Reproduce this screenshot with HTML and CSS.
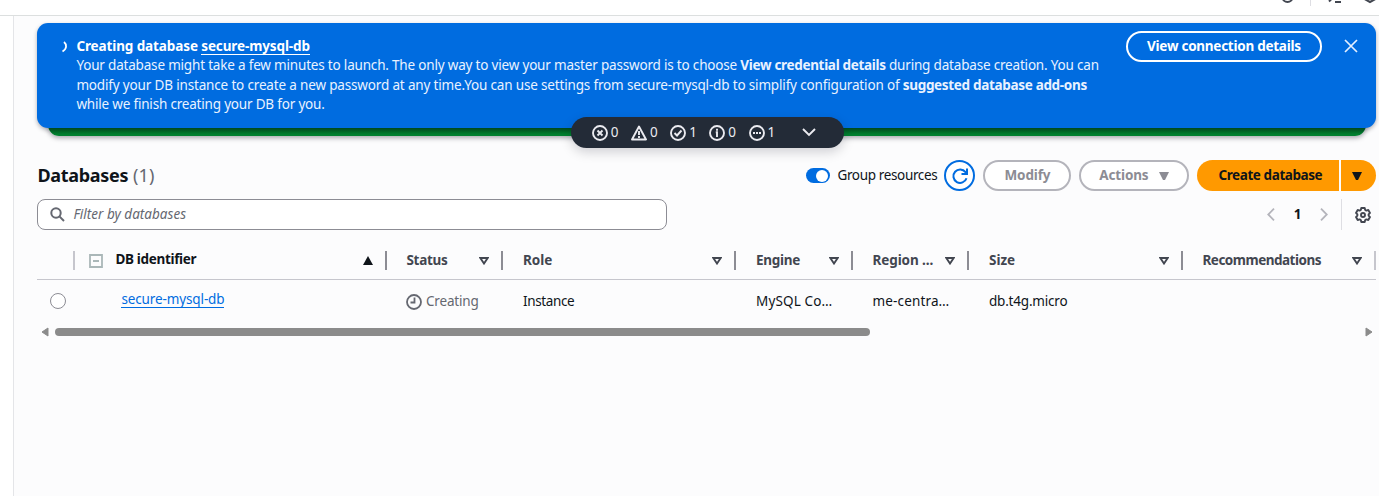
FILE: index.html
```html
<!DOCTYPE html>
<html lang="en">
<head>
<meta charset="utf-8">
<title>Databases</title>
<link rel="stylesheet" href="styles.css">
</head>
<body>
<header class="topbar">
  <svg class="top-icons" width="110" height="15" viewBox="0 0 110 15" fill="none" stroke="#424650" stroke-width="2">
    <circle cx="18.500" cy="-3" r="5"/>
    <path d="M41.500 0V6" stroke="#dedee3" stroke-width="1"/>
    <path d="M60 1.500l3-3M66 2h6"/>
    <path d="M95.500-3v2l5.500 3 5.500-3v-2"/>
    <path d="M97-1h8"/>
  </svg>
</header>
<div class="shell">
  <aside class="side"></aside>
  <main class="main">
    <div class="flash-stack">
      <section class="flash">
        <svg class="spinner" width="8" height="12" viewBox="0 0 8 12" fill="none" stroke="#fff" stroke-width="1.800"><path d="M3 1c3 2.500 3 7-1.500 9.500"/></svg>
        <div class="flash-body">
          <div class="flash-title"><span>Creating database <a class="flash-link">secure-mysql-db</a></span></div>
          <div class="l1">Your database might take a few minutes to launch. The only way to view your master password is to choose <b>View credential details</b> during database creation. You can</div>
          <div class="l2">modify your DB instance to create a new password at any time.You can use settings from secure-mysql-db to simplify configuration of <b>suggested database add-ons</b></div>
          <div class="l3">while we finish creating your DB for you.</div>
        </div>
        <button class="btn flash-btn"><span>View connection details</span></button>
        <svg class="close" width="14" height="14" viewBox="0 0 14 14" stroke="#e4efff" stroke-width="1.700"><path d="M1 1l12 12M13 1L1 13"/></svg>
      </section>
      <div class="flash-under"></div>
      <div class="pill">
        <span class="stat"><svg width="16" height="16" viewBox="0 0 16 16"><circle cx="8" cy="8" r="7"/><path d="M5.500 5.500l5 5m0-5l-5 5"/></svg>0</span>
        <span class="stat"><svg width="16" height="16" viewBox="0 0 16 16"><path d="M8 1.500L15 14.500H1z" stroke-linejoin="round"/><path d="M8 6v4M8 11v2"/></svg>0</span>
        <span class="stat"><svg width="16" height="16" viewBox="0 0 16 16"><circle cx="8" cy="8" r="7"/><path d="M4.500 8l2.500 2.500 4.500-5"/></svg>1</span>
        <span class="stat"><svg width="16" height="16" viewBox="0 0 16 16"><circle cx="8" cy="8" r="7"/><path d="M8 3.800v2M6.800 7.300H8v4.200M8 7v5"/></svg>0</span>
        <span class="stat"><svg width="16" height="16" viewBox="0 0 16 16"><circle cx="8" cy="8" r="7"/><path d="M4 8h2M7 8h2M10 8h2"/></svg>1</span>
        <svg class="chev" width="14" height="9" viewBox="0 0 14 9"><path d="M1 1l6 6 6-6"/></svg>
      </div>
    </div>

    <div class="heading">
      <h1><span class="h-name">Databases</span> <span class="count">(1)</span></h1>
      <span class="toggle"><i></i></span>
      <span class="group">Group resources</span>
      <button class="btn refresh"><svg width="18" height="18" viewBox="0 0 18 18" fill="none" stroke="#006ce0" stroke-width="2"><path d="M15.500 11.200A6.700 6.700 0 1 1 14.500 5.200L16 7"/><path d="M16 1.500V7H10.500"/></svg></button>
      <button class="btn off modify"><span>Modify</span></button>
      <button class="btn off actions"><span>Actions</span><svg width="10" height="8" viewBox="0 0 10 8" fill="#8c8c94"><path d="M0 0h10L6 8H4z"/></svg></button>
      <div class="split">
        <button class="btn create"><span>Create database</span></button>
        <button class="btn more"><svg width="10" height="8" viewBox="0 0 10 8" fill="#0f141a"><path d="M0 0h10L6 8H4z"/></svg></button>
      </div>
    </div>

    <div class="tools">
      <div class="filter">
        <svg width="15" height="15" viewBox="0 0 15 15" fill="none" stroke="#656871" stroke-width="2"><circle cx="6" cy="6" r="4.700"/><path d="M9.400 9.400L14 14"/></svg>
        <span class="placeholder">Filter by databases</span>
      </div>
      <div class="pager">
        <svg width="8" height="13" viewBox="0 0 8 13"><path d="M7 .700L1.200 6.500 7 12.300"/></svg>
        <b>1</b>
        <svg width="8" height="13" viewBox="0 0 8 13"><path d="M1 .700l5.800 5.800L1 12.300"/></svg>
      </div>
      <div class="gear"><svg width="16" height="16" viewBox="0 0 16 16" fill="none" stroke="#424650" stroke-width="1.900" stroke-linejoin="round"><path d="M6.300 1h3.400l.5 2 1.100.6 2-.6 1.700 2.900-1.400 1.500v1.200L15 10.100 13.300 13l-2-.6-1.100.6-.5 2H6.300l-.5-2-1.100-.6-2 .6L1 10.100l1.400-1.500V7.400L1 5.900 2.700 3l2 .6L5.800 3z"/><circle cx="8" cy="8" r="2"/></svg></div>
    </div>

    <div class="row head">
      <div class="cell"></div>
      <div class="cell ident">
        <svg width="14" height="14" viewBox="0 0 14 14" fill="none" stroke="#aab7b8" stroke-width="1.800"><path d="M1 1h12v12H1zM4 7h6"/></svg>
        <span class="t-ident">DB identifier</span>
        <svg class="sort asc" width="10" height="9" viewBox="0 0 10 9"><path d="M5 0l5 9H0z"/></svg>
      </div>
      <div class="cell"><span class="t-status">Status</span><svg class="sort" width="10" height="8" viewBox="0 0 10 8"><path d="M1.300 1h7.400L5 6.500z"/></svg></div>
      <div class="cell"><span class="t-role">Role</span><svg class="sort" width="10" height="8" viewBox="0 0 10 8"><path d="M1.300 1h7.400L5 6.500z"/></svg></div>
      <div class="cell"><span class="t-engine">Engine</span><svg class="sort" width="10" height="8" viewBox="0 0 10 8"><path d="M1.300 1h7.400L5 6.500z"/></svg></div>
      <div class="cell"><span class="t-region">Region ...</span><svg class="sort" width="10" height="8" viewBox="0 0 10 8"><path d="M1.300 1h7.400L5 6.500z"/></svg></div>
      <div class="cell"><span class="t-size">Size</span><svg class="sort" width="10" height="8" viewBox="0 0 10 8"><path d="M1.300 1h7.400L5 6.500z"/></svg></div>
      <div class="cell"><span class="t-rec">Recommendations</span><svg class="sort" width="10" height="8" viewBox="0 0 10 8"><path d="M1.300 1h7.400L5 6.500z"/></svg></div>
    </div>
    <div class="row data">
      <div class="cell pick"><i class="radio"></i></div>
      <div class="cell name"><a class="link">secure-mysql-db</a></div>
      <div class="cell creating"><svg width="16" height="16" viewBox="0 0 16 16" fill="none" stroke="#656871" stroke-width="1.800"><circle cx="8" cy="8" r="7"/><path d="M8.500 3.500V8.500H4.500"/></svg><span class="d-status">Creating</span></div>
      <div class="cell"><span class="d-role">Instance</span></div>
      <div class="cell"><span class="d-engine">MySQL Co…</span></div>
      <div class="cell"><span class="d-region">me-centra…</span></div>
      <div class="cell"><span class="d-size">db.t4g.micro</span></div>
      <div class="cell"></div>
    </div>
    <div class="scroll">
      <svg width="8" height="10" viewBox="0 0 8 10"><path d="M7 1v8L1 5z"/></svg>
      <i class="thumb"></i>
      <svg width="8" height="10" viewBox="0 0 8 10"><path d="M1 1v8l6-4z"/></svg>
    </div>
  </main>
</div>
</body>
</html>
```
FILE: styles.css
```css
* { box-sizing: border-box; }
body { margin: 0; height: 496px; overflow: hidden; display: flex; flex-direction: column; background: #fff; color: #0f141a; font-family: "Noto Sans", "Open Sans", sans-serif; font-size: 13.5px; line-height: 19.4px; white-space: nowrap; }
svg { flex: none; display: block; }
.topbar { height: 16px; flex: none; border-bottom: 1px solid #dcdfdf; display: flex; justify-content: flex-end; }
.shell { flex: 1; display: flex; }
.side { width: 14px; border-right: 1px solid #e4e5e8; }
.main { flex: 1; min-width: 0; background: #fcfcfd; padding: 7px 2.600px 0 23.400px; }

.flash-stack { position: relative; height: 122px; }
.flash { position: relative; z-index: 1; height: 105px; border-radius: 11px; background: #006ce0; color: #e9f2ff; display: flex; padding: 14px 12.500px 0 24px; box-shadow: 0 2px 4px rgba(0,7,22,.3); }
.spinner { margin: 4px 7px 0 0; }
.flash-body { flex: 1; min-width: 0; }
.flash-body div { position: relative; }
.flash-title { font-weight: 700; color: #fff; letter-spacing: -.11px; }
.flash-link { border-bottom: 1px solid #fff; display: inline-block; line-height: 16px; }
.flash-body b { font-weight: 700; letter-spacing: -.32px; }
.l1 { letter-spacing: -.186px; }
.l2 { letter-spacing: -.163px; }
.l3 { letter-spacing: -.19px; }
.flash-under { height: 14px; margin: -6px 10px 0 10.500px; border-radius: 0 0 11px 11px; background: linear-gradient(#006324 50%, #008030 90%); box-shadow: 0 2px 5px rgba(0,7,22,.35); }
.btn { font: inherit; font-weight: 700; height: 31px; border-radius: 16px; border: 2px solid; background: #fff; display: flex; align-items: center; justify-content: center; padding: 0; flex: none; }
.flash-btn { width: 196px; margin-top: -6px; color: #fff; background: none; letter-spacing: -.26px; }
.close { margin: 2px 6px 0 22px; }
.pill { position: absolute; z-index: 2; left: 533.400px; top: 94px; width: 273px; height: 31px; border-radius: 16px; background: #232b37; color: #ebebf0; display: flex; align-items: center; padding-left: 21px; box-shadow: 0 4px 12px rgba(0,7,22,.18); }
.stat { display: flex; align-items: center; gap: 3px; width: 39.200px; }
.pill svg { fill: none; stroke: #ebebf0; stroke-width: 1.900; }
.pill .chev { margin-left: 14px; }

.heading { height: 31px; margin-top: 15px; display: flex; align-items: center; }
h1 { margin: 0; flex: 1; font-size: 18px; font-weight: 700; }
.h-name { letter-spacing: -.3px; }
.count { font-weight: 400; color: #656871; letter-spacing: .2px; }
.toggle { width: 24px; height: 15px; border-radius: 8px; background: #006ce0; padding: 2px; display: flex; justify-content: flex-end; }
.toggle i { width: 12px; height: 12px; margin-top: -.5px; border-radius: 50%; background: #fff; }
.group { margin-left: 7px; width: 107px; letter-spacing: -.35px; }
.refresh { width: 31px; border-color: #006ce0; }
.off { color: #8c8c94; border-color: #b4b4bb; letter-spacing: -.15px; }
.modify { width: 88px; margin-left: 8px; }
.actions { width: 110px; margin-left: 8px; gap: 11px; }
.split { display: flex; gap: 2px; margin-left: 8px; }
.create, .more { border: 0; background: #ff9900; color: #0f141a; }
.create { width: 142px; border-radius: 16px 0 0 16px; padding-left: 4px; letter-spacing: -.42px; }
.more { width: 35px; border-radius: 0 16px 16px 0; padding-right: 4px; }

.tools { height: 31px; margin-top: 8px; display: flex; align-items: center; }
.filter { width: 630px; height: 31px; border: 1px solid #8c8c94; border-radius: 8px; background: #fff; display: flex; align-items: center; padding-left: 12px; gap: 8px; margin-right: auto; }
.placeholder { font-style: italic; color: #656871; letter-spacing: .01px; }
.pager { display: flex; align-items: center; gap: 19px; margin-right: 13px; }
.pager svg { fill: none; stroke: #b4b4bb; stroke-width: 1.800; }
.gear { height: 31px; border-left: 1px solid #dedee3; padding: 0 5px 0 13px; display: flex; align-items: center; }

.row { display: grid; grid-template-columns: 38px 311.500px 116.500px 233px 116.500px 116.500px 213.500px 193.500px; }
.head { height: 50px; border-bottom: 1px solid #c6c6cd; padding-top: 21px; font-weight: 700; color: #424650; }
.cell { display: flex; align-items: center; padding-left: 19.600px; min-width: 0; }
.head .cell { height: 19px; border-right: 2px solid #8c8c94; padding-right: 12px; }
.head .cell:first-child, .head .cell:last-child { border-color: #c6c6cd; }
.head .ident { padding-left: 14px; color: #0f141a; gap: 12px; }
.head .ident span { margin-top: -1px; }
.t-ident { letter-spacing: -.32px; }
.t-status, .t-engine { letter-spacing: -.3px; }
.t-region { letter-spacing: -.1px; }
.t-rec { letter-spacing: -.5px; }
.sort { margin-left: auto; fill: none; stroke: #424650; stroke-width: 1.900; }
.asc { fill: #0f141a; stroke: none; }
.data { height: 43px; }
.data .pick { padding-left: 12.600px; padding-bottom: 1px; }
.data .name { padding-left: 46px; }
.radio { width: 16px; height: 16px; border: 1px solid #8c8c94; border-radius: 50%; background: #fff; }
.link { color: #006ce0; border-bottom: 1px solid #006ce0; line-height: 16px; margin-top: -4px; letter-spacing: -.12px; }
.creating { color: #656871; gap: 4px; padding-left: 19px; }
.d-status { letter-spacing: -.15px; }
.d-role { letter-spacing: -.38px; }
.d-engine, .d-region { letter-spacing: .15px; }
.d-size { letter-spacing: -.2px; }
.scroll { display: flex; align-items: center; height: 18px; padding: 0 3px 0 4px; }
.scroll svg { fill: #8b8b8b; stroke: #8b8b8b; stroke-linejoin: round; }
.thumb { width: 815px; height: 8px; border-radius: 4px; background: #8b8b8b; margin: 0 auto 0 6px; }
```
